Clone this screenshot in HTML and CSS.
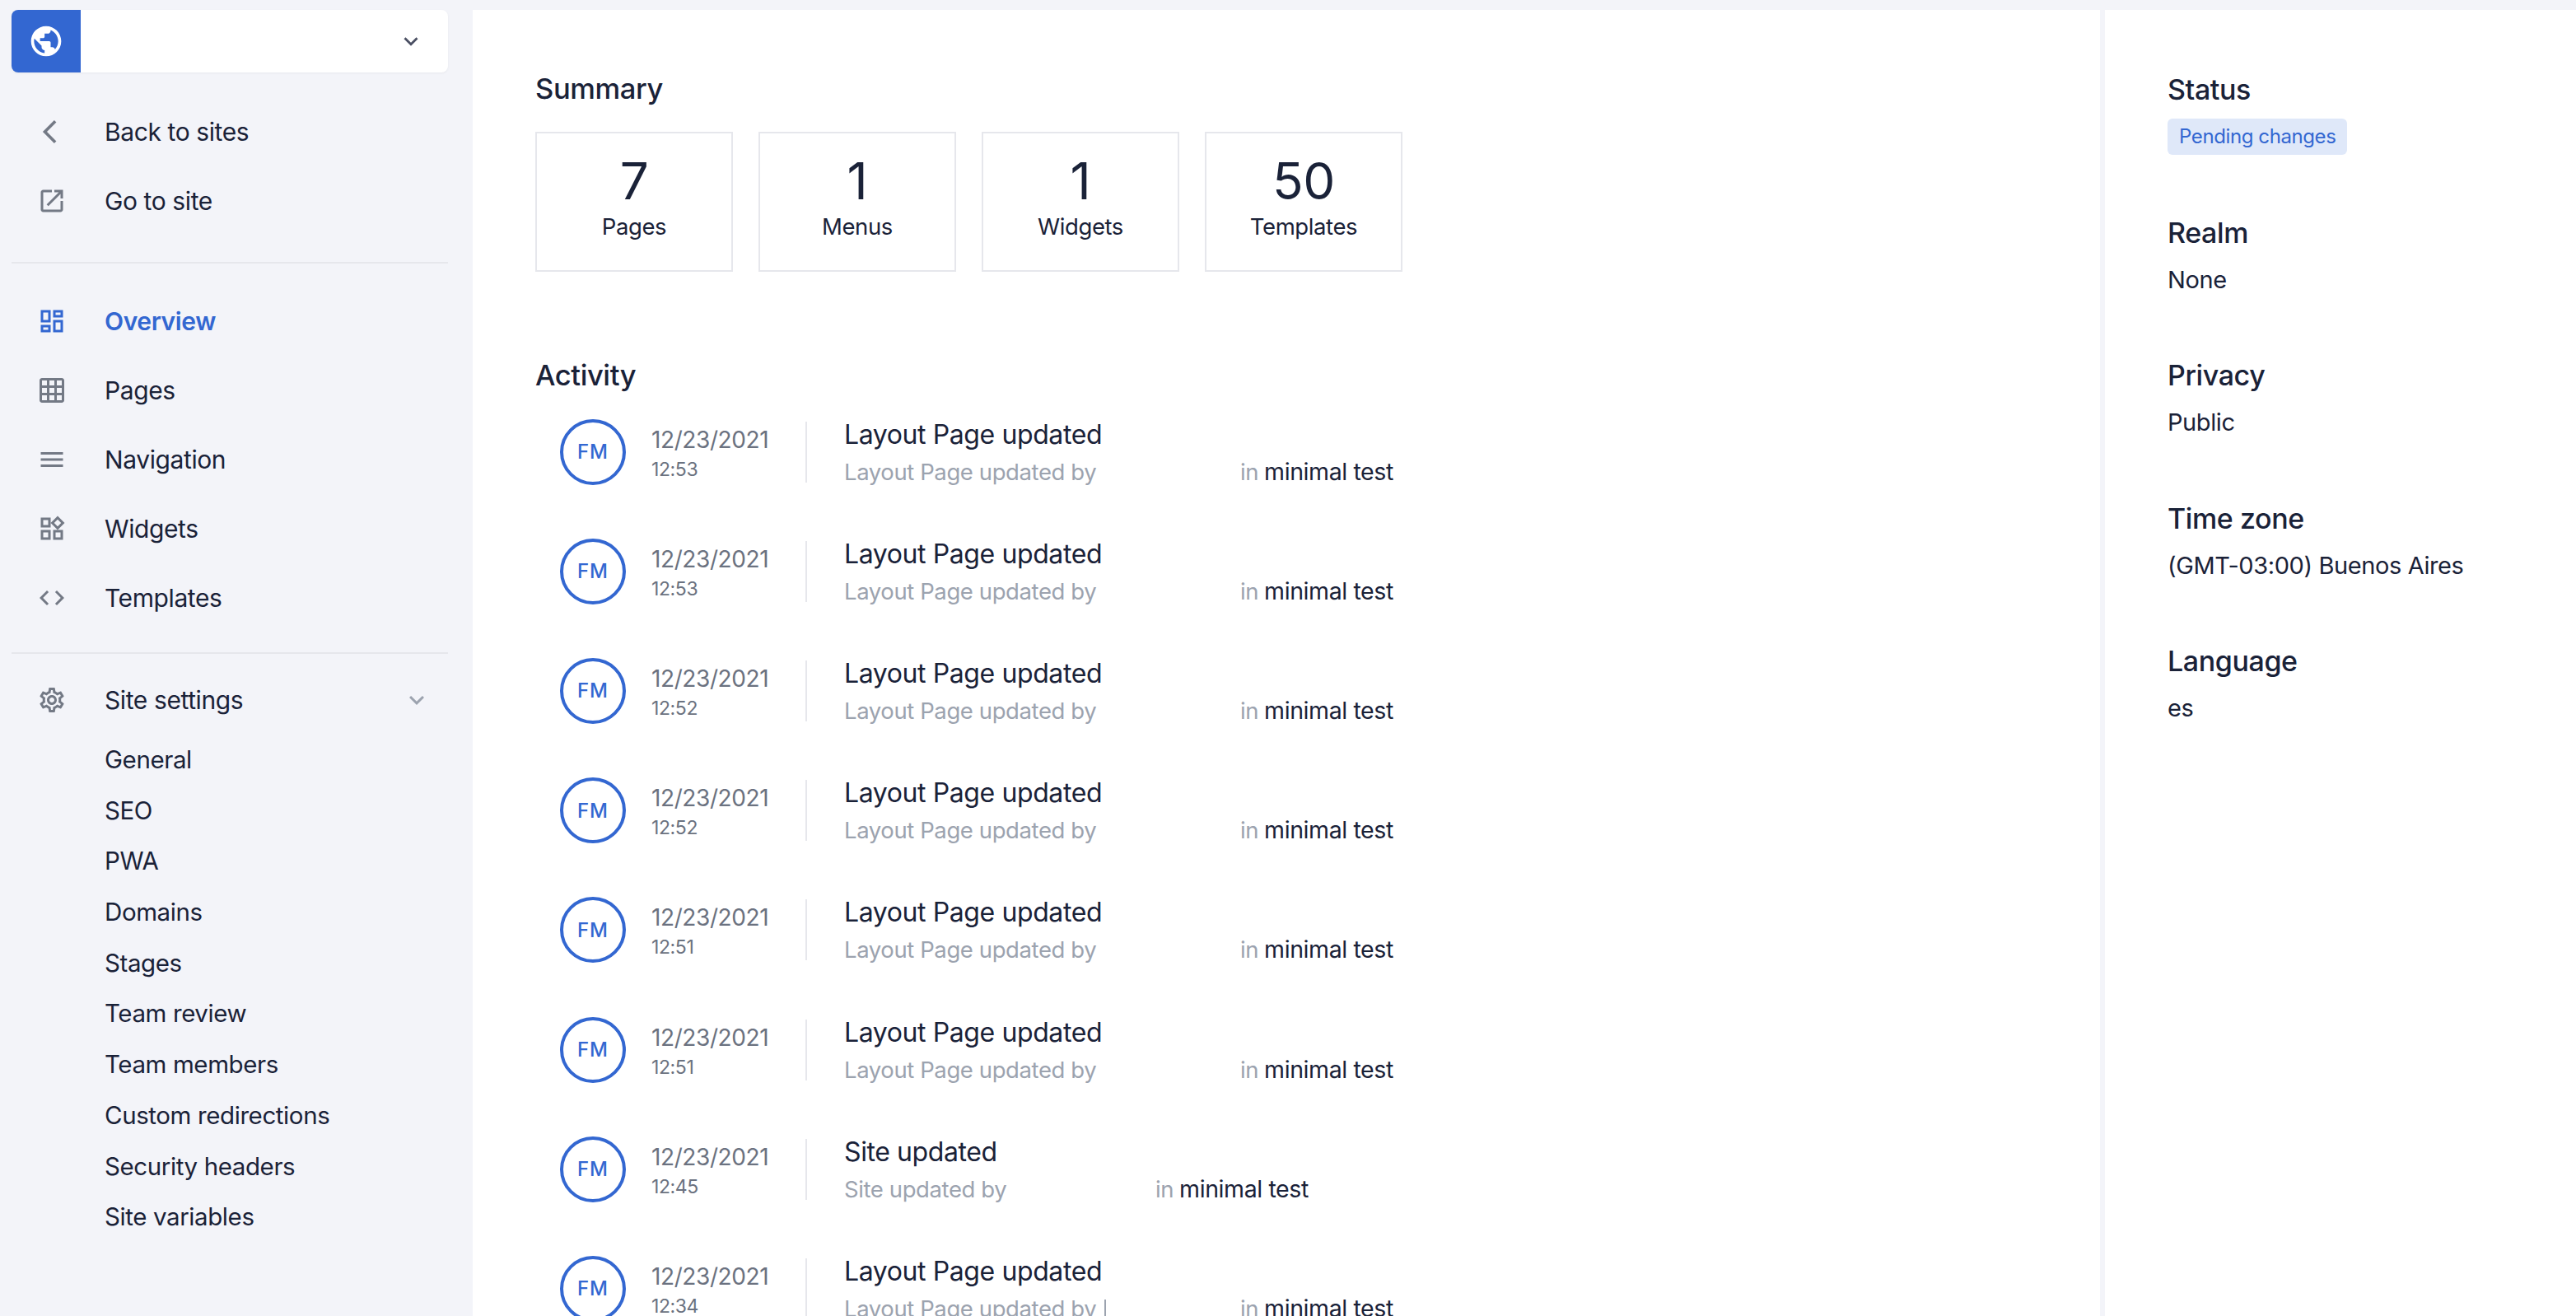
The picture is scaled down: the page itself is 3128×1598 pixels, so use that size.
FILE: index.html
```html
<!DOCTYPE html>
<html lang="en">
<head>
  <meta charset="UTF-8">
  <title>Site overview</title>
  <link rel="stylesheet" href="styles.css">
</head>
<body>
  <aside class="sidebar">
    <div class="site-picker">
      <div class="site-logo">
        <svg width="44" height="44" viewBox="0 0 24 24" fill="#fff"><path d="M12 2C6.48 2 2 6.48 2 12s4.48 10 10 10 10-4.48 10-10S17.52 2 12 2zm-1 17.93c-3.95-.49-7-3.85-7-7.93 0-.62.08-1.21.21-1.79L9 15v1c0 1.1.9 2 2 2v1.93zm6.9-2.54c-.26-.81-1-1.39-1.9-1.39h-1v-3c0-.55-.45-1-1-1H8v-2h2c.55 0 1-.45 1-1V7h2c1.1 0 2-.9 2-2v-.41c2.93 1.19 5 4.06 5 7.41 0 2.08-.8 3.97-2.1 5.39z"/></svg>
      </div>
      <svg class="picker-arrow" width="34" height="34" viewBox="0 0 24 24" fill="#4b5063"><path d="M7.41 8.59L12 13.17l4.59-4.58L18 10l-6 6-6-6 1.41-1.41z"/></svg>
    </div>

    <nav>
      <a class="nav-item">
        <svg class="nav-icon" viewBox="0 0 24 24"><path d="M15.6 4.4l-1.7-1.7L4.6 12l9.3 9.3 1.7-1.7L8 12z"/></svg>
        Back to sites
      </a>
      <a class="nav-item">
        <svg class="nav-icon" viewBox="0 0 24 24"><path d="M19 19H5V5h7V3H5c-1.11 0-2 .9-2 2v14c0 1.1.89 2 2 2h14c1.1 0 2-.9 2-2v-7h-2v7zM14 3v2h3.59l-9.83 9.83 1.41 1.41L19 6.41V10h2V3h-7z"/></svg>
        Go to site
      </a>
    </nav>

    <hr class="nav-line nav-line-first">

    <nav class="nav-main">
      <a class="nav-item active">
        <svg class="nav-icon" viewBox="0 0 24 24"><path d="M19 5v2h-4V5h4M9 5v6H5V5h4m10 8v6h-4v-6h4M9 17v2H5v-2h4M21 3h-8v6h8V3zM11 3H3v10h8V3zm10 8h-8v10h8V11zm-10 4H3v6h8v-6z"/></svg>
        Overview
      </a>
      <a class="nav-item">
        <svg class="nav-icon" viewBox="0 0 24 24"><path d="M20 2H4c-1.1 0-2 .9-2 2v16c0 1.1.9 2 2 2h16c1.1 0 2-.9 2-2V4c0-1.1-.9-2-2-2zM8 20H4v-4h4v4zm0-6H4v-4h4v4zm0-6H4V4h4v4zm6 12h-4v-4h4v4zm0-6h-4v-4h4v4zm0-6h-4V4h4v4zm6 12h-4v-4h4v4zm0-6h-4v-4h4v4zm0-6h-4V4h4v4z"/></svg>
        Pages
      </a>
      <a class="nav-item">
        <svg class="nav-icon" viewBox="0 0 24 24"><path d="M3 18h18v-2H3v2zm0-5h18v-2H3v2zm0-7v2h18V6H3z"/></svg>
        Navigation
      </a>
      <a class="nav-item">
        <svg class="nav-icon" viewBox="0 0 24 24"><path d="M16.66 4.52l2.83 2.83-2.83 2.83-2.83-2.83 2.83-2.83M9 5v4H5V5h4m10 10v4h-4v-4h4M9 15v4H5v-4h4m7.66-13.31L11 7.34 16.66 13l5.66-5.66-5.66-5.65zM11 3H3v8h8V3zm10 10h-8v8h8v-8zm-10 0H3v8h8v-8z"/></svg>
        Widgets
      </a>
      <a class="nav-item">
        <svg class="nav-icon" viewBox="0 0 24 24"><path d="M9.4 16.6L4.8 12l4.6-4.6L8 6l-6 6 6 6 1.4-1.4zm5.2 0l4.6-4.6-4.6-4.6L16 6l6 6-6 6-1.4-1.4z"/></svg>
        Templates
      </a>
    </nav>

    <hr class="nav-line nav-line-second">

    <a class="nav-item nav-settings">
      <svg class="nav-icon" viewBox="0 0 24 24"><path d="M19.43 12.98c.04-.32.07-.64.07-.98 0-.34-.03-.66-.07-.98l2.11-1.65c.19-.15.24-.42.12-.64l-2-3.46c-.09-.16-.26-.25-.44-.25-.06 0-.12.01-.17.03l-2.49 1c-.52-.4-1.08-.73-1.69-.98l-.38-2.65C14.46 2.18 14.25 2 14 2h-4c-.25 0-.46.18-.49.42l-.38 2.65c-.61.25-1.17.59-1.69.98l-2.49-1c-.06-.02-.12-.03-.18-.03-.17 0-.34.09-.43.25l-2 3.46c-.13.22-.07.49.12.64l2.11 1.65c-.04.32-.07.65-.07.98 0 .33.03.66.07.98l-2.11 1.65c-.19.15-.24.42-.12.64l2 3.46c.09.16.26.25.44.25.06 0 .12-.01.17-.03l2.49-1c.52.4 1.08.73 1.69.98l.38 2.65c.03.24.24.42.49.42h4c.25 0 .46-.18.49-.42l.38-2.65c.61-.25 1.17-.59 1.69-.98l2.49 1c.06.02.12.03.18.03.17 0 .34-.09.43-.25l2-3.46c.12-.22.07-.49-.12-.64l-2.11-1.65zm-1.98-1.71c.04.31.05.52.05.73 0 .21-.02.43-.05.73l-.14 1.13.89.7 1.08.84-.7 1.21-1.27-.51-1.04-.42-.9.68c-.43.32-.84.56-1.25.73l-1.06.43-.16 1.13-.2 1.35h-1.4l-.19-1.35-.16-1.13-1.06-.43c-.43-.18-.83-.41-1.23-.71l-.91-.7-1.06.43-1.27.51-.7-1.21 1.08-.84.89-.7-.14-1.13c-.03-.31-.05-.54-.05-.74s.02-.43.05-.73l.14-1.13-.89-.7-1.08-.84.7-1.21 1.27.51 1.04.42.9-.68c.43-.32.84-.56 1.25-.73l1.06-.43.16-1.13.2-1.35h1.39l.19 1.35.16 1.13 1.06.43c.43.18.83.41 1.23.71l.91.7 1.06-.43 1.27-.51.7 1.21-1.07.85-.89.7.14 1.13zM12 8c-2.21 0-4 1.79-4 4s1.79 4 4 4 4-1.79 4-4-1.79-4-4-4zm0 6c-1.1 0-2-.9-2-2s.9-2 2-2 2 .9 2 2-.9 2-2 2z"/></svg>
      Site settings
      <svg class="settings-arrow" width="36" height="36" viewBox="0 0 24 24" fill="#9ca3af"><path d="M7.41 8.59L12 13.17l4.59-4.58L18 10l-6 6-6-6 1.41-1.41z"/></svg>
    </a>
    <div class="sub-nav">
      <a>General</a>
      <a>SEO</a>
      <a>PWA</a>
      <a>Domains</a>
      <a>Stages</a>
      <a>Team review</a>
      <a>Team members</a>
      <a>Custom redirections</a>
      <a>Security headers</a>
      <a>Site variables</a>
    </div>
  </aside>

  <main class="content">
    <h2 class="section-title">Summary</h2>
    <div class="summary">
      <div class="stat"><div class="stat-num">7</div><div class="stat-label">Pages</div></div>
      <div class="stat"><div class="stat-num">1</div><div class="stat-label">Menus</div></div>
      <div class="stat"><div class="stat-num">1</div><div class="stat-label">Widgets</div></div>
      <div class="stat"><div class="stat-num">50</div><div class="stat-label">Templates</div></div>
    </div>

    <h2 class="section-title activity-title">Activity</h2>
    <div class="activity">
      <div class="row">
        <div class="avatar">FM</div>
        <div class="when"><div class="date">12/23/2021</div><div class="time">12:53</div></div>
        <div class="what">
          <div class="what-title">Layout Page updated</div>
          <div class="what-sub"><span class="by">Layout Page updated by</span><span class="in">in</span><span class="site">minimal test</span></div>
        </div>
      </div>
      <div class="row">
        <div class="avatar">FM</div>
        <div class="when"><div class="date">12/23/2021</div><div class="time">12:53</div></div>
        <div class="what">
          <div class="what-title">Layout Page updated</div>
          <div class="what-sub"><span class="by">Layout Page updated by</span><span class="in">in</span><span class="site">minimal test</span></div>
        </div>
      </div>
      <div class="row">
        <div class="avatar">FM</div>
        <div class="when"><div class="date">12/23/2021</div><div class="time">12:52</div></div>
        <div class="what">
          <div class="what-title">Layout Page updated</div>
          <div class="what-sub"><span class="by">Layout Page updated by</span><span class="in">in</span><span class="site">minimal test</span></div>
        </div>
      </div>
      <div class="row">
        <div class="avatar">FM</div>
        <div class="when"><div class="date">12/23/2021</div><div class="time">12:52</div></div>
        <div class="what">
          <div class="what-title">Layout Page updated</div>
          <div class="what-sub"><span class="by">Layout Page updated by</span><span class="in">in</span><span class="site">minimal test</span></div>
        </div>
      </div>
      <div class="row">
        <div class="avatar">FM</div>
        <div class="when"><div class="date">12/23/2021</div><div class="time">12:51</div></div>
        <div class="what">
          <div class="what-title">Layout Page updated</div>
          <div class="what-sub"><span class="by">Layout Page updated by</span><span class="in">in</span><span class="site">minimal test</span></div>
        </div>
      </div>
      <div class="row">
        <div class="avatar">FM</div>
        <div class="when"><div class="date">12/23/2021</div><div class="time">12:51</div></div>
        <div class="what">
          <div class="what-title">Layout Page updated</div>
          <div class="what-sub"><span class="by">Layout Page updated by</span><span class="in">in</span><span class="site">minimal test</span></div>
        </div>
      </div>
      <div class="row">
        <div class="avatar">FM</div>
        <div class="when"><div class="date">12/23/2021</div><div class="time">12:45</div></div>
        <div class="what">
          <div class="what-title">Site updated</div>
          <div class="what-sub"><span class="by by-short">Site updated by</span><span class="in">in</span><span class="site">minimal test</span></div>
        </div>
      </div>
      <div class="row">
        <div class="avatar">FM</div>
        <div class="when"><div class="date">12/23/2021</div><div class="time">12:34</div></div>
        <div class="what">
          <div class="what-title">Layout Page updated</div>
          <div class="what-sub"><span class="by by-cut">Layout Page updated by</span><span class="in">in</span><span class="site">minimal test</span></div>
        </div>
      </div>
    </div>
  </main>

  <aside class="details">
    <div class="detail">
      <h3>Status</h3>
      <span class="badge">Pending changes</span>
    </div>
    <div class="detail">
      <h3>Realm</h3>
      <p>None</p>
    </div>
    <div class="detail">
      <h3>Privacy</h3>
      <p>Public</p>
    </div>
    <div class="detail">
      <h3>Time zone</h3>
      <p>(GMT-03:00) Buenos Aires</p>
    </div>
    <div class="detail">
      <h3>Language</h3>
      <p>es</p>
    </div>
  </aside>
</body>
</html>
```

FILE: styles.css
```css
/* Page frame */
html, body {
  height: 100%;
  margin: 0;
  overflow: hidden;
}

body {
  display: flex;
  padding-top: 12px;
  box-sizing: border-box;
  background-color: #f3f4f9;
  color: #1a2238;
  font-family: Inter, "Noto Sans", sans-serif;
  font-size: 28px;
  letter-spacing: -0.4px;
}

/* Sidebar */
.sidebar {
  width: 574px;
  flex-shrink: 0;
  padding: 0 30px 0 14px;
  box-sizing: border-box;
}

.site-picker {
  display: flex;
  align-items: center;
  justify-content: space-between;
  height: 76px;
  margin-bottom: 30px;
  padding-right: 28px;
  background-color: #fff;
  border-radius: 8px;
  box-shadow: 0 1px 3px rgba(0, 0, 0, 0.05);
  overflow: hidden;
}

.site-logo {
  display: flex;
  align-items: center;
  justify-content: center;
  width: 84px;
  height: 100%;
  background-color: #3367d1;
}

.nav-item {
  display: flex;
  align-items: center;
  height: 84px;
  padding-left: 31px;
  font-size: 30px;
}

.nav-icon {
  width: 36px;
  height: 36px;
  margin-right: 46px;
  fill: #737985;
  flex-shrink: 0;
}

.nav-item.active {
  color: #3367d1;
  font-weight: 600;
}

.nav-item.active .nav-icon {
  fill: #3367d1;
}

.nav-line {
  height: 2px;
  margin: 0;
  border: none;
  background-color: #e6e7ec;
}

.nav-line-first {
  margin-top: 32px;
}

.nav-main {
  margin-top: 28px;
}

.nav-line-second {
  margin-top: 24px;
}

.nav-settings {
  margin-top: 14px;
}

.settings-arrow {
  margin-left: auto;
  margin-right: 20px;
}

.sub-nav {
  padding-left: 113px;
}

.sub-nav a {
  display: block;
  height: 61.7px;
  line-height: 61.7px;
  font-size: 29.5px;
}

/* Main column */
.content {
  flex: 1;
  padding: 74px 0 0 76px;
  background-color: #fff;
}

.section-title {
  margin: 0 0 30px;
  font-size: 34.5px;
  font-weight: 500;
  line-height: 44px;
}

.summary {
  display: flex;
  gap: 31px;
}

.stat {
  width: 240px;
  height: 170px;
  box-sizing: border-box;
  border: 2px solid #e6e7ec;
  text-align: center;
}

.stat-num {
  margin-top: 28px;
  font-size: 62px;
  line-height: 60px;
}

.stat-label {
  margin-top: 6px;
  font-size: 27.5px;
  line-height: 38px;
}

.activity-title {
  margin: 104px 0 0;
}

.activity {
  margin-top: -2px;
}

.row {
  display: flex;
  align-items: center;
  height: 145.2px;
  padding-left: 30px;
}

.avatar {
  display: flex;
  align-items: center;
  justify-content: center;
  width: 80px;
  height: 80px;
  box-sizing: border-box;
  border: 4px solid #3367d1;
  border-radius: 50%;
  color: #3367d1;
  font-size: 24px;
  font-weight: 500;
  letter-spacing: 1px;
}

.when {
  width: 189px;
  height: 74px;
  box-sizing: border-box;
  margin-left: 31px;
  padding-top: 2px;
  border-right: 2px solid #e6e7ec;
  color: #6b7280;
}

.date {
  font-size: 28px;
  line-height: 40px;
}

.time {
  font-size: 23px;
  line-height: 32px;
}

.what {
  margin-top: 2px;
  margin-left: 45px;
}

.what-title {
  font-size: 32px;
  line-height: 40px;
}

.what-sub {
  display: flex;
  margin-top: 6px;
  font-size: 27.5px;
  line-height: 38px;
  white-space: pre;
}

/* the author's name is blanked out in the list, the space stays */
.by {
  width: 481px;
  color: #9ca3af;
}

.by-short {
  width: 378px;
}

.by-cut {
  position: relative;
}

.by-cut::after {
  content: "";
  position: absolute;
  left: 316px;
  top: 8px;
  width: 2px;
  height: 26px;
  background-color: #9ca3af;
}

.in {
  color: #9ca3af;
}

.site {
  margin-left: 7px;
  font-size: 28.5px;
}

/* Details column */
.details {
  width: 572px;
  flex-shrink: 0;
  margin-left: 6px;
  padding: 75px 0 0 76px;
  box-sizing: border-box;
  background-color: #fff;
}

.detail {
  margin-bottom: 72.5px;
}

.detail h3 {
  margin: 0 0 13px;
  font-size: 34px;
  font-weight: 500;
  line-height: 44px;
}

.detail p {
  margin: 0;
  font-size: 29px;
  line-height: 44px;
}

.badge {
  display: block;
  width: max-content;
  height: 44px;
  padding: 0 14px;
  background-color: #dfe8f9;
  border-radius: 6px;
  color: #3367d1;
  font-size: 24px;
  line-height: 44px;
}
```
